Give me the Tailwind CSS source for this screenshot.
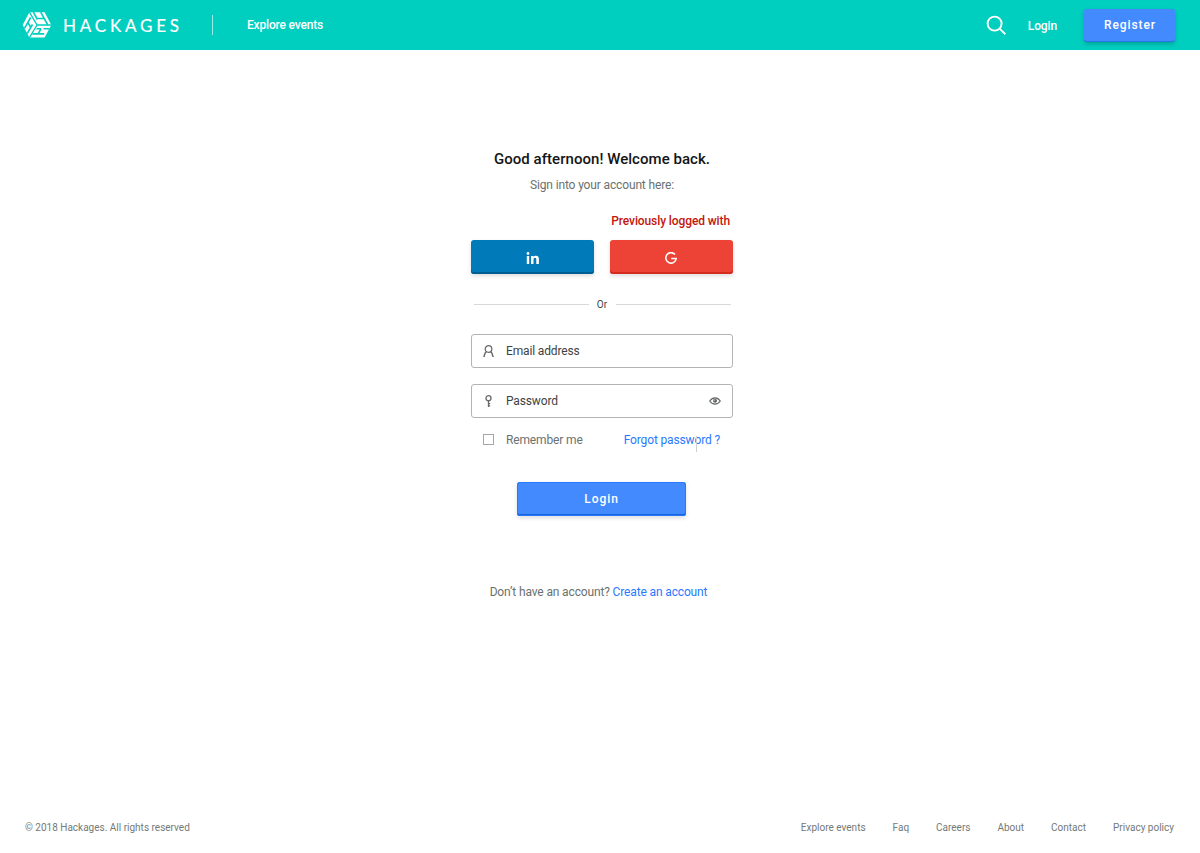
<!DOCTYPE html>
<html lang="en">
<head>
<meta charset="utf-8">
<title>Hackages – Login</title>
<script src="https://cdn.jsdelivr.net/npm/@tailwindcss/browser@4"></script>
</head>
<body class="flex h-[853px] w-[1200px] flex-col overflow-hidden bg-white font-['Roboto',sans-serif] text-xs tracking-[-0.14px] text-[#6b716f]">
<header class="flex h-[50px] shrink-0 items-center bg-[#00cebf] pr-[25px] pl-[22px] font-medium text-white">
  <svg class="h-[28px] w-[30px] shrink-0" viewBox="0 0 30 28" fill="none">
    <path fill="#fff" d="M7.400 1.200H22.600L29.300 14 22.600 26.600H7.400L.7 14Z"/>
    <g stroke="#00cebf" stroke-width="1.300">
      <path d="M7.400 1.200 15 14 7.400 26.600M15 14H29.300"/>
      <path stroke-width="1.600" d="M11.300 1.200 15.500 8.500M18.700 1.200 25.800 14M14.800 7.500H22.200"/>
      <path stroke-width="1.600" d="M2.500 17.300 8.600 6.500M5.200 22.500 10.500 13.500M5.800 11.500 8.900 16.500"/>
      <path stroke-width="1.600" d="M14.500 17.800H19M21.500 17.800H27.300M10.300 22.900H22.200M19 17.800 16 22.900"/>
    </g>
  </svg>
  <div class="ml-[11px] w-[141px] whitespace-nowrap pt-px font-['Lato',sans-serif] text-[17px] leading-5 font-normal tracking-[3.8px] [-webkit-text-stroke:0.2px_white]">HACKAGES</div>
  <div class="ml-[8px] h-5 w-px bg-white/60"></div>
  <a class="ml-[34px] tracking-[-0.18px]">Explore events</a>
  <svg class="ml-auto h-5 w-5" viewBox="0 0 20 20" fill="none" stroke="#fff" stroke-width="1.900"><circle cx="8.600" cy="8.600" r="7"/><path d="m13.600 13.600 5.800 5.600"/></svg>
  <a class="mt-[2px] ml-[22px]">Login</a>
  <button class="ml-[27px] h-[33px] w-[91px] rounded-[3px] bg-[#448aff] font-medium tracking-[0.9px] shadow-[inset_0_-1px_0_#2478e0,0_2px_4px_#0003]"><span class="pl-px">Register</span></button>
</header>

<main class="ml-[471px] flex w-[262px] flex-1 flex-col items-center pt-[99px] whitespace-nowrap">
  <h1 class="text-[15px] leading-5 font-medium tracking-[0.04px] text-[#141414]">Good afternoon! Welcome back.</h1>
  <p class="mt-[8px] leading-4">Sign into your account here:</p>
  <p class="mt-5 mr-[3px] self-end leading-4 font-medium tracking-[-0.1px] text-[#c4160c]">Previously logged with</p>
  <div class="mt-[11px] flex w-[262px] justify-between">
    <button class="flex h-[34px] w-[123px] items-center justify-center rounded-[3px] bg-[#007ab9] pt-px shadow-[inset_0_-2px_0_#005f92,0_2px_4px_#0002]">
      <svg class="h-3 w-[14px]" viewBox="0 0 14 12" fill="#fff"><circle cx="2" cy="1.5" r="1.4"/><path d="M.8 4h2.400v8H.8zM5 4h2.500v1.100C7.900 4.200 8.700 3.800 9.900 3.800c2.300 0 3 1.500 3 3.500V12h-2.600V7.800c0-1.100-.2-2-1.300-2S7.500 6.700 7.500 7.800V12H5z"/></svg>
    </button>
    <button class="flex h-[34px] w-[123px] items-center justify-center rounded-[3px] bg-[#ed4337] pt-px pr-px shadow-[inset_0_-2px_0_#d52c20,0_2px_4px_#0002]">
      <svg class="h-3 w-3" viewBox="0 0 12 12" fill="none" stroke="#fff" stroke-width="1.600"><path d="M10 2.500A5.200 5.200 0 1 0 11.200 6.500H6.200"/></svg>
    </button>
  </div>
  <div class="mt-[22px] flex w-[257px] items-center justify-between text-[10px] leading-4 text-[#444]">
    <span class="h-px w-[115px] bg-[#d5d9d8]"></span><span class="pt-px tracking-normal">Or</span><span class="h-px w-[115px] bg-[#d5d9d8]"></span>
  </div>
  <div class="mt-[21px] flex h-[34px] w-[262px] shrink-0 items-center rounded-[3px] border border-[#b2b5b4] pl-[11px] text-[#3e4341]">
    <svg class="mr-[11px] h-[12px] w-[12px]" viewBox="0 0 12 12" fill="none" stroke="#666b69" stroke-width="1.300"><circle cx="5.500" cy="4" r="3.300"/><path d="M3.500 6.700Q1.700 7.600 1.200 11.300H.3M7.500 6.700Q9.300 7.600 9.800 11.300H10.700"/></svg>
    Email address
  </div>
  <div class="mt-4 flex h-[34px] w-[262px] shrink-0 items-center rounded-[3px] border border-[#b2b5b4] pr-[11px] pl-[11px] text-[#3e4341]">
    <svg class="mr-[11px] h-[12px] w-[12px]" viewBox="0 0 12 12" fill="none" stroke="#666b69" stroke-width="1.300"><circle cx="5.500" cy="3.200" r="2.500"/><path d="M5.500 5.600V12M5.500 8.600H7.200M5.500 10.900H7.200"/></svg>
    Password
    <svg class="ml-auto h-[8px] w-[12px]" viewBox="0 0 12 8" fill="none" stroke="#5f6462" stroke-width="1.200"><path d="M.7 4Q3 .8 6 .8T11.300 4Q9 7.200 6 7.200T.7 4Z"/><circle cx="6" cy="3.800" r="2" fill="#5f6462" stroke="none"/><path d="M5 3.700Q5.200 2.800 6.200 2.800" stroke="#fff" stroke-width=".7"/></svg>
  </div>
  <div class="relative mt-[14px] flex w-[262px] items-center pr-[13px] pl-[12px] leading-4">
    <span class="mr-3 -mt-px h-[11px] w-[11px] border border-[#a3a8a6]"></span>Remember me
    <a class="ml-auto text-[#2979ff]">Forgot password ?</a>
    <span class="absolute top-1 left-[225px] h-4 w-px bg-[#d0d0d0]"></span>
  </div>
  <button class="mt-[34px] mr-px h-[34px] w-[169px] shrink-0 rounded-[3px] bg-[#448aff] font-medium tracking-[0.95px] text-white shadow-[inset_0_0_0_1px_#2979ff,inset_0_-2px_0_#1565d8,0_2px_4px_#0002]">Login</button>
  <p class="mt-[68px] -ml-[7px] leading-4">Don’t have an account? <a class="text-[#2979ff]">Create an account</a></p>
</main>

<footer class="flex h-[53px] shrink-0 items-center justify-between pt-[2px] pr-[26px] pl-[25px] text-[10px] tracking-normal whitespace-nowrap text-[#747a78]">
  <span>© 2018 Hackages. All rights reserved</span>
  <nav class="flex gap-[27px]"><a>Explore events</a><a>Faq</a><a>Careers</a><a>About</a><a>Contact</a><a>Privacy policy</a></nav>
</footer>
</body>
</html>
